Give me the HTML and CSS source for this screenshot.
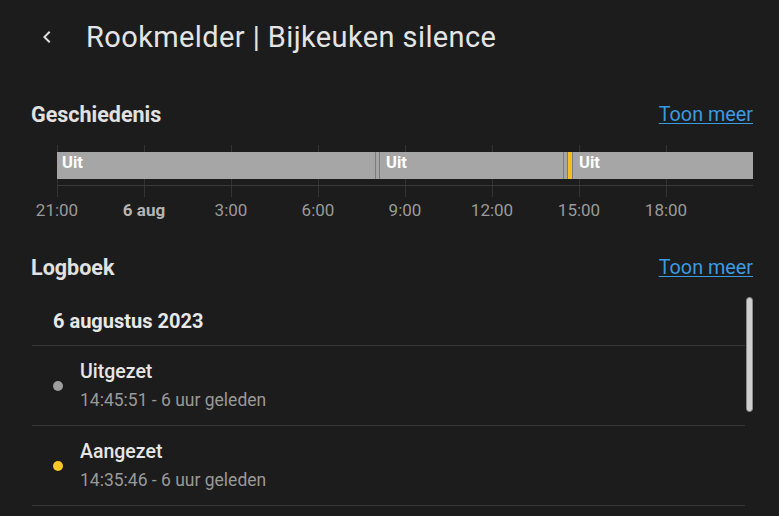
FILE: index.html
```html
<!DOCTYPE html>
<html lang="nl">
<head>
<meta charset="utf-8">
<title>Rookmelder | Bijkeuken silence</title>
<link rel="stylesheet" href="styles.css">
</head>
<body>
<div class="dialog">
  <header class="top">
    <button class="back" aria-label="Terug">
      <svg viewBox="0 0 24 24" width="24" height="24"><path d="M15.4 7.4 14 6l-6 6 6 6 1.4-1.4L10.8 12z" fill="#e1e1e1"/></svg>
    </button>
    <h1 class="title">Rookmelder | Bijkeuken silence</h1>
  </header>

  <main class="content">
    <section class="history">
      <div class="section-head">
        <h2>Geschiedenis</h2>
        <a class="more" href="#">Toon meer</a>
      </div>
      <div class="chart">
        <div class="bar">
          <div class="seg off" style="width:318px"><span>Uit</span></div>
          <div class="seg off sep" style="width:4px"></div>
          <div class="seg off sep" style="width:184px"><span>Uit</span></div>
          <div class="seg off sep" style="width:4px"></div>
          <div class="seg on sep" style="width:5px"></div>
          <div class="seg off sep" style="width:181px"><span>Uit</span></div>
        </div>
      </div>
      <div class="axis">
        <span>21:00</span>
        <span class="day">6 aug</span>
        <span>3:00</span>
        <span>6:00</span>
        <span>9:00</span>
        <span>12:00</span>
        <span>15:00</span>
        <span>18:00</span>
      </div>
    </section>

    <section class="logbook">
      <div class="section-head">
        <h2>Logboek</h2>
        <a class="more" href="#">Toon meer</a>
      </div>
      <div class="log-wrap">
        <div class="log">
          <div class="log-date">6 augustus 2023</div>
          <div class="entry">
            <span class="dot grey"></span>
            <div class="entry-text">
              <div class="entry-title">Uitgezet</div>
              <div class="entry-time">14:45:51 - 6 uur geleden</div>
            </div>
          </div>
          <div class="entry">
            <span class="dot yellow"></span>
            <div class="entry-text">
              <div class="entry-title">Aangezet</div>
              <div class="entry-time">14:35:46 - 6 uur geleden</div>
            </div>
          </div>
        </div>
        <div class="scroll-track"><div class="scroll-thumb"></div></div>
      </div>
    </section>
  </main>
</div>
</body>
</html>
```

FILE: styles.css
```css
* { box-sizing: border-box; }
html, body {
  margin: 0;
  padding: 0;
  background: #1c1c1c;
  height: 100%;
  overflow: hidden;
}
body {
  font-family: Roboto, "Noto Sans", "Liberation Sans", sans-serif;
  color: #e1e1e1;
}
.dialog { width: 779px; }

.top {
  display: flex;
  align-items: center;
  height: 74px;
  padding-left: 35px;
}
.back {
  width: 24px;
  height: 24px;
  padding: 0;
  border: 0;
  background: none;
  display: flex;
  align-items: center;
  justify-content: center;
}
.back svg { display: block; }
.title {
  margin: 0 0 0 27px;
  font-size: 29px;
  font-weight: 400;
  color: #e4e4e4;
  letter-spacing: 0.4px;
  line-height: 34px;
}

.content {
  padding: 26px 26px 0 31px;
}

.section-head {
  display: flex;
  justify-content: space-between;
  align-items: center;
  height: 28px;
}
.section-head h2 {
  margin: 0;
  font-size: 21.5px;
  font-weight: 700;
  color: #e1e1e1;
}
.more {
  font-size: 19.8px;
  color: #3a9be0;
  text-decoration: underline;
  text-underline-offset: 2px;
}

.chart {
  margin: 17px 0 0 26px;
  width: 696px;
  height: 52px;
  padding-top: 7px;
  background-image:
    linear-gradient(#3a3a3a, #3a3a3a),
    repeating-linear-gradient(to right, #343434 0 1px, transparent 1px 87px);
  background-size: 100% 1px, 100% 100%;
  background-position: 0 40px, 0 0;
  background-repeat: no-repeat, no-repeat;
}
.bar {
  display: flex;
  height: 27px;
  box-shadow: inset 0 0 0 1px #8c8c8c;
}
.seg {
  height: 100%;
  flex: none;
  overflow: hidden;
}
.seg.off { background: #a6a6a6; }
.seg.on { background: #f4c020; }
.seg.sep { border-left: 1px solid #7c7c7c; }
.seg span {
  display: block;
  padding: 1px 0 0 5px;
  font-size: 16.5px;
  line-height: 19px;
  font-weight: 700;
  color: #ffffff;
}
.seg.sep span { padding-left: 6px; }

.axis {
  display: flex;
  margin-left: -17.5px;
  height: 26px;
}
.axis span {
  width: 87px;
  flex: none;
  text-align: center;
  font-size: 17px;
  line-height: 26px;
  color: #9a9a9a;
}
.axis .day {
  font-weight: 700;
  color: #b4b4b4;
}

.logbook { margin-top: 30px; }

.log-wrap {
  display: flex;
  margin-top: 15px;
}
.log {
  flex: 1;
  margin-left: 1px;
}
.log-date {
  height: 50px;
  display: flex;
  align-items: center;
  padding-left: 21px;
  font-size: 20px;
  font-weight: 700;
  color: #e8e8e8;
  border-bottom: 1px solid #373737;
}
.entry {
  display: flex;
  align-items: center;
  padding: 14px 0 14px 21px;
  border-bottom: 1px solid #373737;
}
.dot {
  width: 10px;
  height: 10px;
  border-radius: 50%;
  flex: none;
  margin-top: 1px;
}
.dot.grey { background: #9e9e9e; }
.dot.yellow { background: #fbc628; }
.entry-text { margin-left: 17px; }
.entry-title {
  font-size: 19.5px;
  line-height: 23px;
  font-weight: 500;
  color: #e6e6e6;
}
.entry-time {
  margin-top: 7px;
  font-size: 17.5px;
  line-height: 21px;
  color: #999999;
}

.scroll-track {
  width: 8px;
  flex: none;
  padding-top: 1px;
}
.scroll-thumb {
  width: 7px;
  height: 115px;
  margin-left: 1px;
  border-radius: 4px;
  background: #cfcfcf;
  border: 1px solid #8a8a8a;
}
```
